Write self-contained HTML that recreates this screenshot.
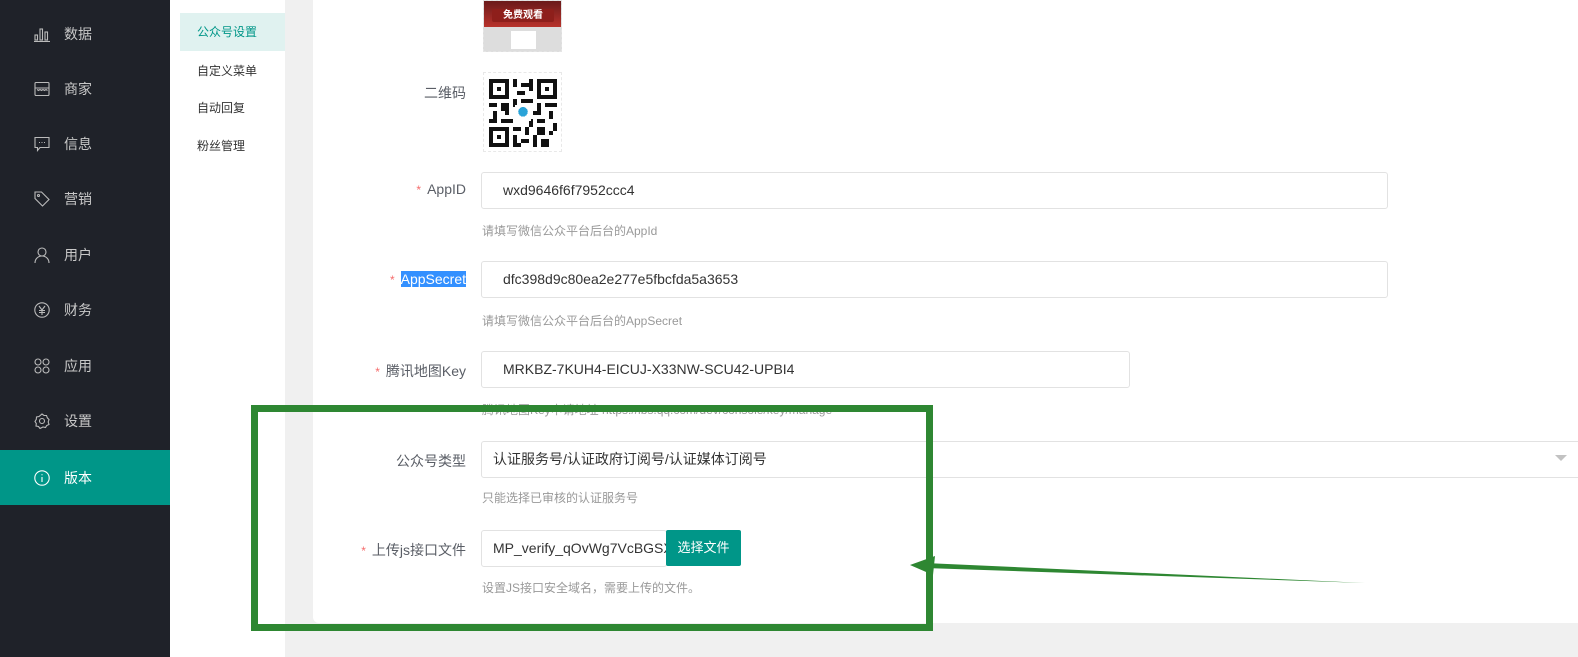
<!DOCTYPE html>
<html><head><meta charset="utf-8"><style>
*{margin:0;padding:0;box-sizing:border-box}
body{width:1578px;height:657px;overflow:hidden;background:#f0f0f0;font-family:"Liberation Sans","Noto Sans CJK SC",sans-serif;position:relative}
.side{position:absolute;left:0;top:0;width:170px;height:657px;background:#1f2229}
.si{position:absolute;left:0;width:170px;height:55px;color:#c8c8c8;font-size:14px}
.si span{position:absolute;left:64px;top:50%;transform:translateY(-50%)}
.si svg{position:absolute;left:34px;top:50%;margin-top:-8px}
.si.act{background:#009688;color:#fff}
.sub{position:absolute;left:170px;top:0;width:115px;height:657px;background:#fff}
.sub div{position:absolute;left:27px;font-size:12px;color:#333}
.sub .a{left:10px;width:105px;height:38px;top:13px;background:#e0f2f0;color:#009688;padding-left:17px;line-height:38px}
.card{position:absolute;left:313px;top:-10px;width:1300px;height:633px;background:#fff;border-radius:6px}
.lab{position:absolute;right:1112px;font-size:14px;color:#5a5e66;white-space:nowrap}
.lab i{color:#f56c6c;font-style:normal;margin-right:6px;font-size:12px}
.inp{position:absolute;left:481px;height:37px;border:1px solid #e2e2e2;border-radius:3px;background:#fff;font-size:14px;color:#333;padding-left:21px;line-height:35px;white-space:nowrap;overflow:hidden}
.hint{position:absolute;left:482px;font-size:12px;color:#999}
</style></head><body>
<div class="side">
<div class="si" style="top:6px"><svg width="16" height="16" viewBox="0 0 16 16" fill="none" stroke="#bbb" stroke-width="1.1"><rect x="1" y="9" width="2.5" height="5"/><rect x="6" y="3" width="2.5" height="11"/><rect x="11" y="6" width="2.5" height="8"/><path d="M0 15.5h16"/></svg><span>数据</span></div>
<div class="si" style="top:61px"><svg width="16" height="16" viewBox="0 0 16 16" fill="none" stroke="#bbb" stroke-width="1.1"><rect x="1" y="1.5" width="14" height="13" rx="1"/><path d="M1 7h14M3 8.5l1.5 1 1.5-1 1.5 1 1.5-1 1.5 1 1.5-1 1.5 1"/></svg><span>商家</span></div>
<div class="si" style="top:116px"><svg width="16" height="16" viewBox="0 0 16 16" fill="none" stroke="#bbb" stroke-width="1.1"><path d="M1 1.5h14v10H6l-2.5 3v-3H1z"/><path d="M5 6.5h1M7.5 6.5h1M10 6.5h1"/></svg><span>信息</span></div>
<div class="si" style="top:171px"><svg width="16" height="16" viewBox="0 0 16 16" fill="none" stroke="#bbb" stroke-width="1.1"><path d="M1 1h6.5l7.5 7.5-6.5 6.5L1 7.5z"/><circle cx="4.5" cy="4.5" r="1"/></svg><span>营销</span></div>
<div class="si" style="top:227px"><svg width="16" height="16" viewBox="0 0 16 16" fill="none" stroke="#bbb" stroke-width="1.1"><circle cx="8" cy="5" r="4"/><path d="M1 16c0-4 3-7 7-7s7 3 7 7"/></svg><span>用户</span></div>
<div class="si" style="top:282px"><svg width="16" height="16" viewBox="0 0 16 16" fill="none" stroke="#bbb" stroke-width="1.1"><circle cx="8" cy="8" r="7.2"/><path d="M5 4l3 4 3-4M8 8v5M5 8.5h6M5 10.5h6"/></svg><span>财务</span></div>
<div class="si" style="top:338px"><svg width="16" height="16" viewBox="0 0 16 16" fill="none" stroke="#bbb" stroke-width="1.1"><circle cx="4" cy="4" r="3"/><circle cx="12" cy="4" r="3"/><circle cx="4" cy="12" r="3"/><circle cx="12" cy="12" r="3"/></svg><span>应用</span></div>
<div class="si" style="top:393px"><svg width="16" height="16" viewBox="0 0 16 16" fill="none" stroke="#bbb" stroke-width="1.1"><path d="M8 1l2 1.5 2.5 0 .8 2.3 1.7 1.7-.8 2.5.8 2.5-2.3 1-1.2 2-2.5-.5L6 15.5l-1.5-2-2.5-.5.3-2.5L1 8.5l1.3-2.2L2.5 4l2.5-.5z"/><circle cx="8" cy="8" r="2.5"/></svg><span>设置</span></div>
<div class="si act" style="top:450px"><svg width="16" height="16" viewBox="0 0 16 16" fill="none" stroke="#fff" stroke-width="1.1"><circle cx="8" cy="8" r="7.2"/><path d="M8 7v5M8 4.3v1"/></svg><span>版本</span></div>
</div>
<div class="sub">
<div class="a">公众号设置</div>
<div style="top:62px">自定义菜单</div>
<div style="top:99px">自动回复</div>
<div style="top:137px">粉丝管理</div>
</div>
<div class="card"></div>
<div style="position:absolute;left:483px;top:0;width:79px;height:52px;background:#ddd;border:1px dashed #e5e5e5">
<div style="height:26px;background:linear-gradient(#6b1a1a,#b8322b)"></div>
<div style="position:absolute;left:8px;top:8px;width:62px;height:13px;background:#8e1f1b;color:#fff;font-size:10px;font-weight:bold;text-align:center;line-height:13px;border-radius:2px">免费观看</div>
<div style="position:absolute;left:27px;top:30px;width:25px;height:18px;background:#fff"></div>
</div>
<div style="position:absolute;left:483px;top:72px;width:79px;height:80px;border:1px dashed #e8e8e8;background:#fff">
<svg width="68" height="68" viewBox="0 0 17 17" style="position:absolute;left:5px;top:6px" shape-rendering="crispEdges">
<g fill="#111"><path d="M0 0h5v5H0zM12 0h5v5h-5zM0 12h5v5H0z"/></g>
<g fill="#fff"><path d="M1 1h3v3H1zM13 1h3v3h-3zM1 13h3v3H1z"/></g>
<g fill="#111"><path d="M2 2h1v1H2zM14 2h1v1h-1zM2 14h1v1H2z"/>
<path d="M6 0h1v2H6zM8 1h2v1H8zM10 0h1v3h-1zM7 3h2v1H7zM6 5h1v2H6zM8 5h3v1H8zM0 6h2v1H0zM3 6h2v2H3zM12 6h1v2h-1zM14 6h3v1h-3zM1 8h1v2H1zM11 8h2v1h-2zM15 8h1v2h-1zM0 10h2v1H0zM3 10h3v1H3zM10 10h1v2h-1zM12 10h2v1h-2zM16 11h1v2h-1zM6 12h2v1H6zM9 12h1v2H9zM12 12h2v2h-2zM6 14h1v3H6zM8 15h2v1H8zM11 14h1v3h-1zM13 15h2v2h-2zM15 13h1v1h-1zM7 16h1v1H7zM4 8h1v1H4zM13 3h0z"/></g>
<rect x="6.5" y="6.5" width="4" height="4" fill="#fff"/><circle cx="8.5" cy="8.2" r="1.2" fill="#2aa3d8"/>
</svg></div>
<div class="lab" style="top:83px">二维码</div>
<div class="lab" style="top:181px"><i>*</i>AppID</div>
<div class="inp" style="top:172px;width:907px">wxd9646f6f7952ccc4</div>
<div class="hint" style="top:222px">请填写微信公众平台后台的AppId</div>
<div class="lab" style="top:271px"><i>*</i><span style="background:#3390ff;color:#fff">AppSecret</span></div>
<div class="inp" style="top:261px;width:907px">dfc398d9c80ea2e277e5fbcfda5a3653</div>
<div class="hint" style="top:312px">请填写微信公众平台后台的AppSecret</div>
<div class="lab" style="top:361px"><i>*</i>腾讯地图Key</div>
<div class="inp" style="top:351px;width:649px">MRKBZ-7KUH4-EICUJ-X33NW-SCU42-UPBI4</div>
<div class="hint" style="top:401px">腾讯地图Key申请地址 https://lbs.qq.com/dev/console/key/manage</div>
<div class="lab" style="top:451px">公众号类型</div>
<div class="inp" style="top:441px;width:1110px;padding-left:11px">认证服务号/认证政府订阅号/认证媒体订阅号</div>
<div style="position:absolute;left:1555px;top:455px;border-left:6px solid transparent;border-right:6px solid transparent;border-top:6px solid #c2c2c2"></div>
<div class="hint" style="top:489px">只能选择已审核的认证服务号</div>
<div class="lab" style="top:540px"><i>*</i>上传js接口文件</div>
<div class="inp" style="top:530px;width:186px;padding-left:11px">MP_verify_qOvWg7VcBGSX</div>
<div style="position:absolute;left:666px;top:530px;width:75px;height:36px;background:#009688;color:#fff;font-size:13px;line-height:36px;text-align:center;border-radius:2px">选择文件</div>
<div class="hint" style="top:579px">设置JS接口安全域名，需要上传的文件。</div>
<div style="position:absolute;left:251px;top:405px;width:682px;height:226px;border:7px solid #2e8732"></div>
<svg width="1578" height="657" style="position:absolute;left:0;top:0">
<path d="M925 563 L1365 583 L925 568Z" fill="#2e8732"/>
<polygon points="910,565 935,556 933,575" fill="#2e8732"/>
</svg>
</body></html>
